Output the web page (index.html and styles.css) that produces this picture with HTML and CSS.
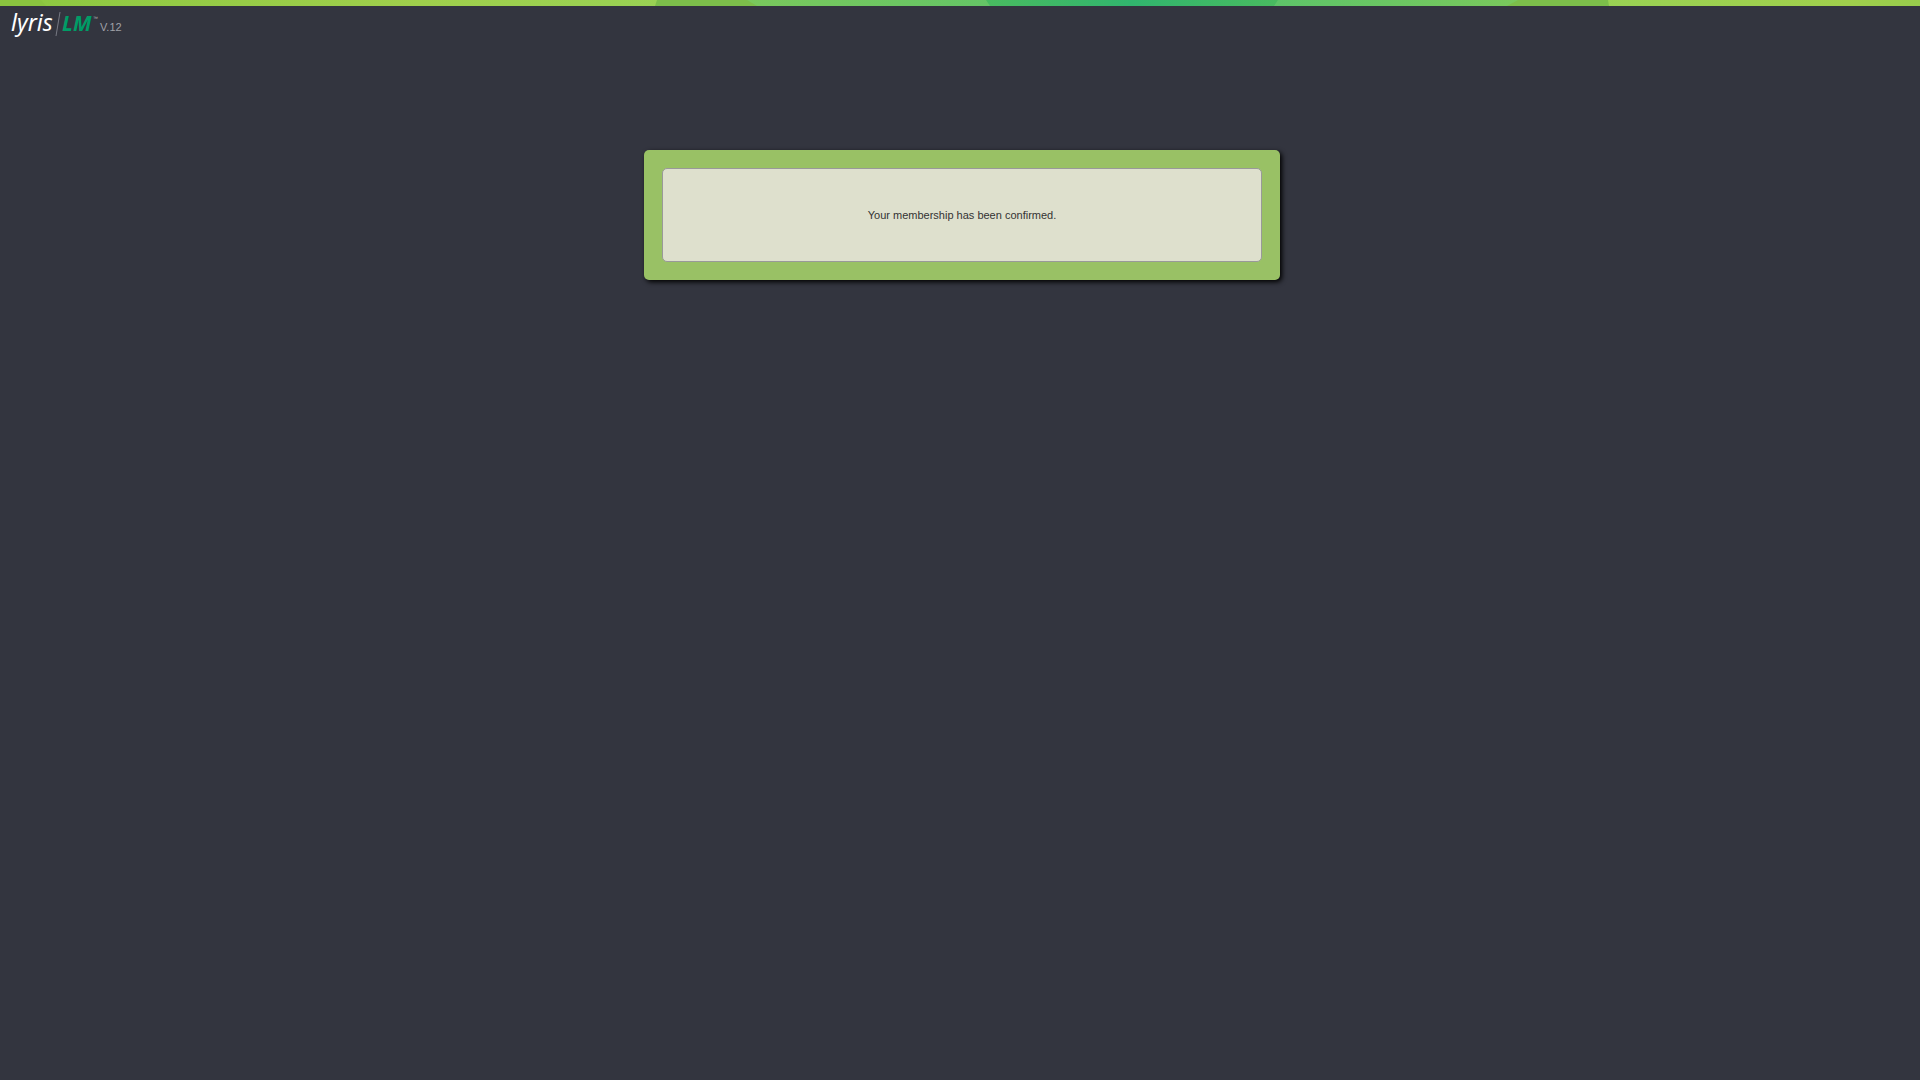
FILE: index.html
```html
<!DOCTYPE html>
<html lang="en">
	<head>
		<meta charset="utf-8">
		<title>Lyris LM</title>
		<link rel="stylesheet" href="styles.css">
	</head>
	<body>
		<svg class="topBar" viewBox="0 0 1920 6" preserveAspectRatio="none" aria-hidden="true">
			<defs>
				<linearGradient id="limeLeft">
					<stop offset="0" stop-color="#8cc840"/>
					<stop offset="0.6" stop-color="#9fcf4c"/>
					<stop offset="1" stop-color="#98d255"/>
				</linearGradient>
				<linearGradient id="limeRight">
					<stop offset="0" stop-color="#98d255"/>
					<stop offset="0.8" stop-color="#a0cf4c"/>
					<stop offset="1" stop-color="#97cc4c"/>
				</linearGradient>
				<linearGradient id="green">
					<stop offset="0" stop-color="#7ac85c"/>
					<stop offset="0.43" stop-color="#5dc469"/>
					<stop offset="0.68" stop-color="#5dc469"/>
					<stop offset="1" stop-color="#7ac85c"/>
				</linearGradient>
				<linearGradient id="teal">
					<stop offset="0" stop-color="#49bb60"/>
					<stop offset="0.5" stop-color="#31b56e"/>
					<stop offset="1" stop-color="#49bb60"/>
				</linearGradient>
			</defs>
			<rect width="700" height="6" fill="url(#limeLeft)"/>
			<path d="M0 0H41L46 6H0z" fill="#8ac43f"/>
			<rect x="1560" width="360" height="6" fill="url(#limeRight)"/>
			<rect x="740" width="780" height="6" fill="url(#green)"/>
			<path d="M657 0H747L757 6H655z" fill="#7cbe4a"/>
			<path d="M1518 0H1608L1609 6H1507z" fill="#7cbe4a"/>
			<path d="M986 0H1278L1274 6H990z" fill="url(#teal)"/>
		</svg>
		<div class="header">
			<svg class="logo" width="89" height="30" viewBox="0 0 89 30" role="img" aria-label="lyris LM">
				<text class="lyris" x="0" y="20">lyris</text>
				<path class="slash" d="M49 1L45 25"/>
				<text class="lm" x="51" y="20">LM</text>
				<text class="tm" x="82" y="9">™</text>
			</svg>
			<span class="version">V.12</span>
		</div>
		<div class="container">
			<div class="panel">
				<div class="message">Your membership has been confirmed.</div>
			</div>
		</div>
	</body>
</html>
```
FILE: styles.css
```css
body {
	margin: 0;
	min-height: 100vh;
	background: #33353f;
	font-family: "Liberation Sans", Arial, sans-serif;
	font-size: 11px;
	color: #333;
}

.topBar {
	display: block;
	width: 100%;
	height: 6px;
}

.header {
	display: flex;
	height: 34px;
	padding: 5px 0 0 11px;
}

.logo {
	overflow: visible;
}

.lyris {
	font: italic 23px "Noto Sans", sans-serif;
	fill: #fff;
}

.slash {
	stroke: #777983;
	stroke-width: 1;
}

.lm {
	font: italic bold 21px "Noto Sans", sans-serif;
	fill: #009c66;
}

.tm {
	font: 5px "Liberation Sans", sans-serif;
	fill: #bbb;
}

.version {
	margin-top: 9px;
	font-size: 11px;
	line-height: 14px;
	color: #a0a1a8;
}

.container {
	display: flex;
	justify-content: center;
	padding: 105px 0 0 4px;
}

.panel {
	padding: 18px;
	background: #99c165;
	border-radius: 5px;
	box-shadow: 2px 2px 5px #000;
}

.message {
	box-sizing: border-box;
	width: 600px;
	padding: 40px;
	border: 1px solid #999;
	border-radius: 5px;
	background: #dee0cd;
	line-height: 12px;
	text-align: center;
}
```
